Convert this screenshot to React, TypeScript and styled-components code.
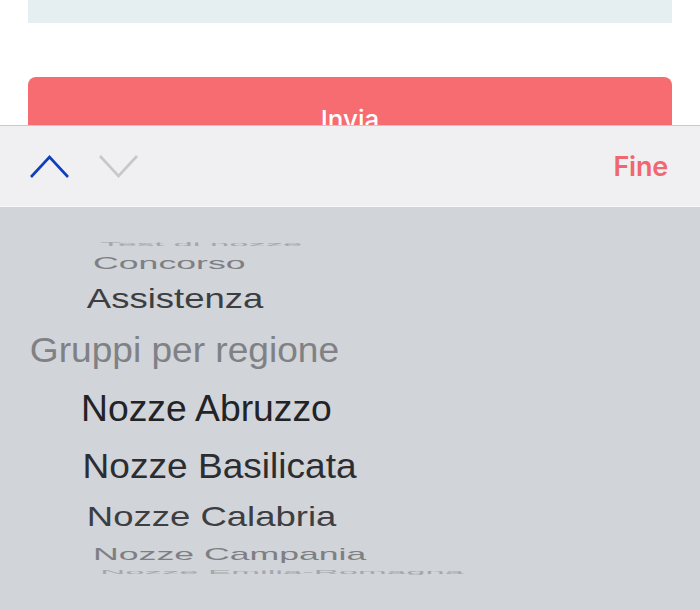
import React from "react";
import styled, { createGlobalStyle } from "styled-components";

const GlobalStyle = createGlobalStyle`
  html, body {
    margin: 0;
    padding: 0;
    width: 700px;
    height: 610px;
    overflow: hidden;
    background: #ffffff;
    font-family: "Liberation Sans", Arial, sans-serif;
  }
`;

const Screen = styled.div`
  width: 700px;
  height: 610px;
  display: flex;
  flex-direction: column;
`;

const PageContent = styled.div`
  height: 125px;
  overflow: hidden;
  padding: 0 28px;
  display: flex;
  flex-direction: column;
  flex-shrink: 0;
`;

const FieldTail = styled.div`
  height: 23px;
  background: #e5eef1;
  margin-bottom: 54px;
  flex-shrink: 0;
`;

const SubmitButton = styled.button`
  height: 85px;
  flex-shrink: 0;
  border: none;
  border-radius: 8px;
  background: #f76c70;
  color: #ffffff;
  font-family: Inter, "Liberation Sans", sans-serif;
  font-size: 26px;
  font-weight: 500;
  display: flex;
  align-items: center;
  justify-content: center;
  padding: 0;
`;

const Toolbar = styled.div`
  height: 80px;
  flex-shrink: 0;
  background: #f0eff1;
  border-top: 1px solid #c9c8cc;
  border-bottom: 1px solid #f8f8f9;
  display: flex;
  align-items: center;
  padding: 0 32px 0 30px;
`;

const NavGroup = styled.div`
  display: flex;
  align-items: center;
  gap: 30px;
`;

const NavArrow = styled.svg<{ $active?: boolean }>`
  width: 39px;
  height: 23px;
  display: block;
  fill: none;
  stroke: ${(p) => (p.$active ? "#0f3fbf" : "#c8c8cc")};
  stroke-width: 2.6;
  stroke-linecap: butt;
  stroke-linejoin: miter;
`;

const DoneButton = styled.span`
  margin-left: auto;
  font-family: Inter, "Liberation Sans", sans-serif;
  font-size: 27px;
  font-weight: 600;
  color: #ef6870;
  letter-spacing: -0.2px;
`;

const Picker = styled.div`
  flex: 1;
  background: #d1d4d9;
  overflow: hidden;
  display: flex;
  flex-direction: column;
  justify-content: center;
`;

const Row = styled.div`
  display: flex;
  align-items: center;
  flex-shrink: 0;
`;

const RowText = styled.div<{ $group?: boolean }>`
  width: 100%;
  box-sizing: border-box;
  padding-left: ${(p) => (p.$group ? "28px" : "81px")};
  font-size: 37.3px;
  line-height: 1;
  white-space: nowrap;
  transform-origin: 50% 50%;
`;

type Item = { label: string; group?: boolean };

const items: Item[] = [
  { label: "Test di nozze" },
  { label: "Concorso" },
  { label: "Assistenza" },
  { label: "Gruppi per regione", group: true },
  { label: "Nozze Abruzzo" },
  { label: "Nozze Basilicata" },
  { label: "Nozze Calabria" },
  { label: "Nozze Campania" },
  { label: "Nozze Emilia-Romagna" },
];

const selected = 4;
const RADIUS = 166;
const STEP = (20.5 * Math.PI) / 180;
const PERSPECTIVE = 1847;
const tones = ["#222326", "#2c2d30", "#3d3e41", "#7e7f83", "#a6a7ab"];

function offset(k: number) {
  const a = Math.max(-Math.PI / 2, Math.min(Math.PI / 2, k * STEP));
  return RADIUS * Math.sin(a);
}

// each row runs between the midpoints of its neighbours; the label is then
// nudged so it sits exactly on its spot of the wheel
function rowGeometry(i: number) {
  const k = i - selected;
  const y = offset(k);
  const prev = i > 0 ? offset(k - 1) : y - (offset(k + 1) - y);
  const next = i < items.length - 1 ? offset(k + 1) : y + (y - offset(k - 1));
  const height = (next - prev) / 2;
  const rowCenter = (prev + 2 * y + next) / 4;
  const shift = y - rowCenter;
  const angle = k * STEP;
  const sx = PERSPECTIVE / (PERSPECTIVE + RADIUS * (1 - Math.cos(angle)));
  const sy = Math.cos(angle) * sx;
  return { height, sx, sy, k, shift };
}

function ChevronUp() {
  return (
    <NavArrow $active viewBox="0 0 39 23">
      <polyline points="1,22 19.5,2 38,22" />
    </NavArrow>
  );
}

function ChevronDown() {
  return (
    <NavArrow viewBox="0 0 39 23">
      <polyline points="1,1 19.5,21 38,1" />
    </NavArrow>
  );
}

export default function App() {
  return (
    <Screen>
      <GlobalStyle />
      <PageContent>
        <FieldTail />
        <SubmitButton>Invia</SubmitButton>
      </PageContent>
      <Toolbar>
        <NavGroup>
          <ChevronUp />
          <ChevronDown />
        </NavGroup>
        <DoneButton>Fine</DoneButton>
      </Toolbar>
      <Picker>
        {items.map((item, i) => {
          const g = rowGeometry(i);
          const color = item.group ? "#808185" : tones[Math.min(4, Math.abs(g.k))];
          return (
            <Row key={item.label} style={{ height: g.height }}>
              <RowText
                $group={item.group}
                style={{
                  transform: `translateY(${g.shift}px) scale(${g.sx}, ${g.sy})`,
                  color,
                }}
              >
                {item.label}
              </RowText>
            </Row>
          );
        })}
      </Picker>
    </Screen>
  );
}
